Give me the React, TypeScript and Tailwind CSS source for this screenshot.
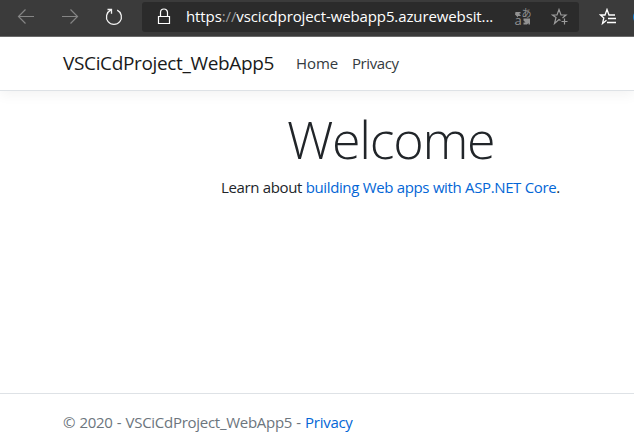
import React from "react";

function NavIcon({ children, className }: { children: React.ReactNode; className: string }) {
  return (
    <svg viewBox="0 0 18 18" fill="none" stroke="currentColor" className={`h-[18px] w-[18px] shrink-0 ${className}`}>
      {children}
    </svg>
  );
}

function BrowserBar() {
  return (
    <div className="flex h-[37px] w-full items-start overflow-hidden border-b border-[#6b6b6b] bg-[#3b3b3b] pt-[2px]">
      <div className="flex h-[30px] w-[142px] shrink-0 items-center pl-[17px]">
        <NavIcon className="text-[#858585]">
          <path d="M17 8.500H1.500M8.500 1.500l-7 7 7 7" strokeWidth="1.200" />
        </NavIcon>
        <NavIcon className="ml-[26px] text-[#858585]">
          <path d="M1 8.500h15.500M9.500 1.500l7 7-7 7" strokeWidth="1.200" />
        </NavIcon>
        <NavIcon className="ml-[26px] text-[#f2f2f2]">
          <path d="M5.700 2.200A7.500 7.500 0 1 0 12.200 2.200M2.500 1.500h4v4.200" strokeWidth="1.300" />
        </NavIcon>
      </div>
      <div className="flex h-[30px] w-[437px] shrink-0 items-center rounded-[3px] bg-[#2b2b2b] pl-[13px]">
        <NavIcon className="text-white">
          <path d="M3.500 8.500h11v7h-11zM5.500 8.500V4.500a3.500 3.500 0 0 1 7 0v4" strokeWidth="1.200" />
        </NavIcon>
        <div className="ml-[13px] w-[328px] pb-px text-[15px] leading-[29px] tracking-[-0.110px] whitespace-nowrap text-white">
          https<span className="text-[#9a9a9a]">://</span>vscicdproject-webapp5.azurewebsit...
        </div>
        <svg viewBox="0 0 18 18" className="h-[18px] w-[18px] shrink-0 overflow-visible text-[#929292]" fill="currentColor">
          <path d="M1.500 4h5v1.500H5L7 8H4v1.500L1 6.500zM16 10.500v6h-1.500v-1.500L13 16.500H9.500v-2h2L9.500 12.500v-2z" />
          <text x="7.500" y="9" fontSize="10" fontFamily="Noto Sans CJK JP, sans-serif">あ</text>
          <text x="0.500" y="16.500" fontSize="13" fontFamily="Open Sans, sans-serif">a</text>
        </svg>
        <NavIcon className="ml-[19px] text-[#9b9b9b]">
          <path d="M9.500 12.500 8 11.500 3.500 15.500l1.500-6L1.500 7H6l2-5.500L10 7h5l-3.500 3M13.500 10.500v6M10.500 13.500h6" strokeWidth="1.200" />
        </NavIcon>
      </div>
      <div className="flex h-[30px] min-w-0 grow items-center overflow-hidden pl-5">
        <NavIcon className="text-white">
          <path d="m7.500 12.200-4 3.300 1.300-5.500L1.500 7H6l2-5.500L10 7h6M9 10.500h8M8 14.500h9" strokeWidth="1.300" />
        </NavIcon>
        <div className="ml-[16px] h-[14px] w-[14px] shrink-0 rounded-full bg-[#1683d8]" />
      </div>
    </div>
  );
}

export default function App() {
  return (
    <div className="flex h-[440px] w-[634px] flex-col overflow-hidden bg-white font-['Open_Sans','Noto_Sans',sans-serif] text-[#212529]">
      <BrowserBar />
      <header className="flex h-[54px] shrink-0 items-center border-b border-[#dee2e6] pb-[2px] pl-[63px] whitespace-nowrap shadow-[0_4px_12px_rgba(0,0,0,0.05)]">
        <a className="w-[233px] text-[19px] leading-[30px] tracking-[-0.350px] text-[#1a1a1a]">VSCiCdProject_WebApp5</a>
        <a className="w-[56px] text-[15px] leading-6 tracking-[-0.100px] text-[#343a40]">Home</a>
        <a className="text-[15px] leading-6 tracking-[-0.400px] text-[#343a40]">Privacy</a>
      </header>
      <main className="flex grow flex-col pt-[15px] pl-[221px] whitespace-nowrap">
        <h1 className="pl-[66px] text-[52px] leading-[66px] font-light tracking-[-1.300px]">Welcome</h1>
        <p className="mt-[3px] text-[15px] leading-6 tracking-[-0.380px] [word-spacing:0.250px]">
          Learn about <a className="text-[#0366d6]">building Web apps with ASP.NET Core</a>.
        </p>
      </main>
      <footer className="h-[47px] shrink-0 border-t border-[#dee2e6] pt-[16px] pl-[63px] text-[15px] leading-6 tracking-[-0.280px] whitespace-nowrap text-[#6c757d] [word-spacing:0.600px]">
        © 2020 - VSCiCdProject_WebApp5 - <a className="text-[#0366d6]">Privacy</a>
      </footer>
    </div>
  );
}
